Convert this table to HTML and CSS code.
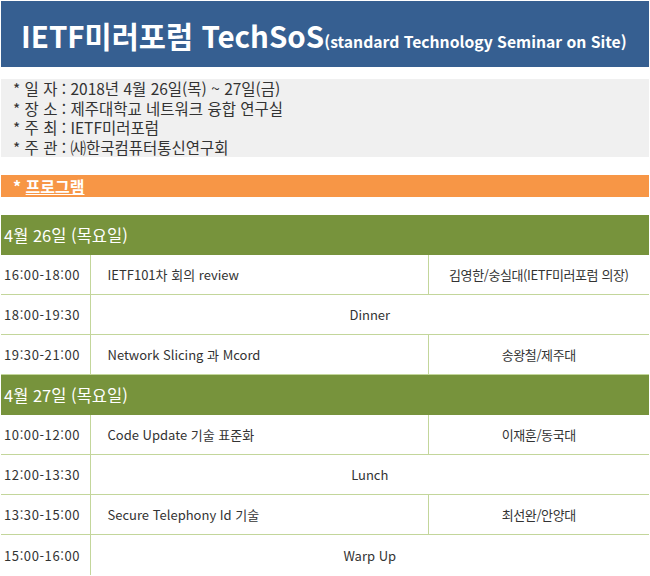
FILE: index.html
```html
<!DOCTYPE html>
<html lang="ko">
<head>
<meta charset="utf-8">
<link rel="stylesheet" href="styles.css">
</head>
<body>
<div class="page">
  <header class="title-bar">
    <span class="title-main">IETF미러포럼 TechSoS</span><span class="title-sub">(standard Technology Seminar on Site)</span>
  </header>
  <section class="info">
    <div>* 일 자 : 2018년 4월 26일(목) ~ 27일(금)</div>
    <div>* 장 소 : 제주대학교 네트워크 융합 연구실</div>
    <div>* 주 최 : IETF미러포럼</div>
    <div>* 주 관 : ㈔한국컴퓨터통신연구회</div>
  </section>
  <div class="program-bar">* <span class="u">프로그램</span></div>
  <table class="schedule">
    <colgroup><col class="c-time"><col class="c-title"><col class="c-speaker"></colgroup>
    <tr class="day"><td colspan="3">4월 26일 (목요일)</td></tr>
    <tr><td class="time">16:00-18:00</td><td class="topic">IETF101차 회의 review</td><td class="speaker">김영한/숭실대(IETF미러포럼 의장)</td></tr>
    <tr><td class="time">18:00-19:30</td><td class="merged" colspan="2">Dinner</td></tr>
    <tr><td class="time">19:30-21:00</td><td class="topic">Network Slicing 과 Mcord</td><td class="speaker">송왕철/제주대</td></tr>
    <tr class="day"><td colspan="3">4월 27일 (목요일)</td></tr>
    <tr><td class="time">10:00-12:00</td><td class="topic">Code Update 기술 표준화</td><td class="speaker">이재훈/동국대</td></tr>
    <tr><td class="time">12:00-13:30</td><td class="merged" colspan="2">Lunch</td></tr>
    <tr><td class="time">13:30-15:00</td><td class="topic">Secure Telephony Id 기술</td><td class="speaker">최선완/안양대</td></tr>
    <tr><td class="time">15:00-16:00</td><td class="merged" colspan="2">Warp Up</td></tr>
  </table>
</div>
</body>
</html>
```
FILE: styles.css
```css
html, body {
  margin: 0;
  padding: 0;
  background: #ffffff;
}
body {
  font-family: "Noto Sans CJK KR", "Noto Sans", sans-serif;
  color: #333333;
}
.page {
  width: 648px;
  padding: 1px 1px 0 1px;
}
.title-bar {
  height: 66px;
  background: #365f91;
  color: #ffffff;
  font-weight: bold;
  display: flex;
  align-items: baseline;
  padding: 0 0 0 20px;
  box-sizing: border-box;
  line-height: 68px;
}
.title-main {
  font-size: 29.5px;
  letter-spacing: 0;
}
.title-sub {
  font-size: 15.7px;
}
.info {
  margin-top: 12px;
  background: #f0f0f0;
  padding: 0 0 0 12px;
  height: 78px;
  box-sizing: border-box;
  font-size: 15.5px;
  line-height: 19.5px;
  color: #333333;
}
.program-bar {
  margin-top: 18px;
  height: 22px;
  background: #f79646;
  color: #ffffff;
  font-weight: bold;
  font-size: 16px;
  line-height: 22px;
  padding-left: 12px;
}
.u {
  text-decoration: underline;
}
.schedule {
  margin-top: 18px;
  width: 648px;
  border-collapse: collapse;
  table-layout: fixed;
  font-size: 13px;
}
.c-time { width: 89px; }
.c-title { width: 338px; }
.c-speaker { width: 221px; }
.schedule td {
  height: 39px;
  padding: 0;
  border-bottom: 1px solid #c3d69b;
  vertical-align: middle;
  color: #333333;
}
.schedule tr:last-child td {
  border-bottom: none;
  height: 40px;
}
.schedule .day td {
  height: 40px;
  border-bottom: none;
  background: #77933c;
  color: #ffffff;
  font-size: 16.5px;
  padding-left: 3px;
}
.time {
  padding-left: 3px !important;
  letter-spacing: 0.6px;
  border-right: 1px solid #c3d69b;
}
.topic {
  padding-left: 17px !important;
}
.speaker {
  border-left: 1px solid #c3d69b;
  text-align: center;
  letter-spacing: -0.4px;
}
.merged {
  text-align: center;
}
```
